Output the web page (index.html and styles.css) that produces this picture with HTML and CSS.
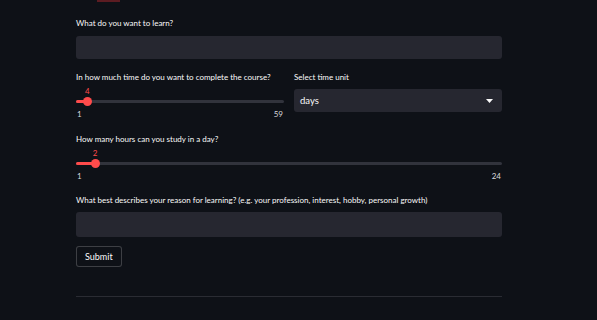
FILE: index.html
```html
<!DOCTYPE html>
<html lang="en">
<head>
    <meta charset="UTF-8">
    <meta name="viewport" content="width=device-width, initial-scale=1.0">
    <title>Course planner</title>
    <link rel="stylesheet" href="styles.css">
</head>
<body>
    <div id="top-mark"></div>
    <form id="main">
        <div class="field">
            <label class="label">What do you want to learn?</label>
            <div class="input"></div>
        </div>

        <div class="row">
            <div class="col">
                <label class="label">In how much time do you want to complete the course?</label>
                <div class="slider">
                    <div class="track">
                        <div class="fill" style="width: 5.17%"></div>
                        <div class="thumb" style="left: 5.17%"><span class="value">4</span></div>
                    </div>
                    <div class="minmax"><span>1</span><span>59</span></div>
                </div>
            </div>
            <div class="col">
                <label class="label">Select time unit</label>
                <div class="select">
                    <span>days</span>
                    <svg class="caret" width="7" height="4" viewBox="0 0 7 4"><path d="M0 0h7L3.5 4z" fill="#fafafa"/></svg>
                </div>
            </div>
        </div>

        <div class="field slim">
            <label class="label">How many hours can you study in a day?</label>
            <div class="slider">
                <div class="track">
                    <div class="fill" style="width: 4.35%"></div>
                    <div class="thumb" style="left: 4.35%"><span class="value">2</span></div>
                </div>
                <div class="minmax"><span>1</span><span>24</span></div>
            </div>
        </div>

        <div class="field last">
            <label class="label">What best describes your reason for learning? (e.g. your profession, interest, hobby, personal growth)</label>
            <div class="input tall"></div>
        </div>

        <div>
            <button type="button" class="btn">Submit</button>
        </div>

        <hr class="divider">
    </form>
</body>
</html>
```

FILE: styles.css
```css
* {
    margin: 0;
    padding: 0;
    box-sizing: border-box;
}

body {
    background-color: #0e1117;
    color: #fafafa;
    font-family: Lato, "Noto Sans", sans-serif;
    font-size: 8px;
}

#top-mark {
    margin-left: 97px;
    width: 23px;
    height: 2px;
    background-color: #5c1c22;
}

#main {
    display: flex;
    flex-direction: column;
    width: 426px;
    margin-left: 76px;
    padding-top: 15px;
}

.field {
    margin-bottom: 12px;
}

.field.slim {
    margin-bottom: 12px;
}

.field.last {
    margin-bottom: 9px;
}

.label {
    display: block;
    height: 12px;
    line-height: 12px;
    margin-bottom: 7px;
    color: #fafafa;
}

.field.last .label {
    margin-bottom: 6px;
}

.input {
    height: 23px;
    border-radius: 3px;
    background-color: #262730;
}

.input.tall {
    height: 25px;
}

.row {
    display: flex;
    gap: 10px;
    margin-bottom: 13px;
}

.col {
    flex: 1;
}

.col:first-child {
    flex: 0 0 208px;
}

.slider {
    padding-top: 10px;
}

.track {
    position: relative;
    height: 3px;
    border-radius: 2px;
    background-color: #31333c;
}

.fill {
    height: 3px;
    border-radius: 2px;
    background-color: #ff4b4b;
}

.thumb {
    position: absolute;
    top: -3px;
    width: 9px;
    height: 9px;
    margin-left: -4px;
    border-radius: 50%;
    background-color: #ff4b4b;
}

.value {
    position: absolute;
    left: 50%;
    bottom: 10px;
    transform: translateX(-50%);
    color: #ff4b4b;
    line-height: 10px;
}

.minmax {
    display: flex;
    justify-content: space-between;
    margin-top: 5px;
    padding: 0 1px;
    line-height: 12px;
    color: #d8d8dc;
}

.select {
    display: flex;
    align-items: center;
    justify-content: space-between;
    height: 23px;
    margin-top: -1px;
    padding: 0 9px 0 6px;
    border-radius: 3px;
    background-color: #262730;
    font-size: 9.5px;
}

.caret {
    display: block;
}

.btn {
    height: 21px;
    padding: 0 8px;
    border: 1px solid rgba(250, 250, 250, .2);
    border-radius: 3px;
    background-color: #0e1117;
    color: #fafafa;
    font-family: Lato, "Noto Sans", sans-serif;
    font-size: 9px;
}

.divider {
    margin-top: 29px;
    border: 0;
    border-top: 1px solid #2a2c33;
}
```
